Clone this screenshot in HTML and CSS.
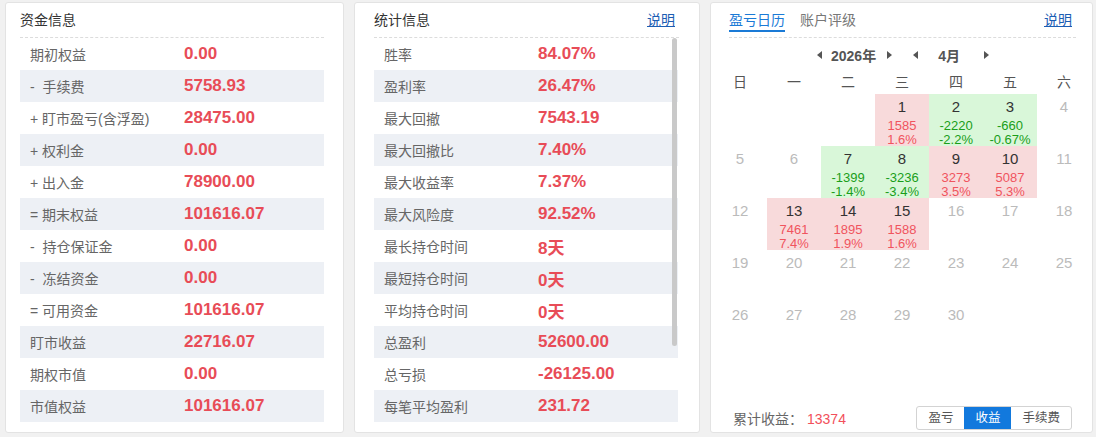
FILE: index.html
```html
<!DOCTYPE html>
<html lang="zh-CN">
<head>
<meta charset="utf-8">
<title>账户信息</title>
<link rel="stylesheet" href="styles.css">
</head>
<body>
<div class="page">
  <section class="card card-fund">
    <div class="card-head"><span class="title">资金信息</span></div>
    <div class="rows">
      <div class="row"><span class="lbl">期初权益</span><span class="val">0.00</span></div>
      <div class="row"><span class="lbl">-&nbsp; 手续费</span><span class="val">5758.93</span></div>
      <div class="row"><span class="lbl">+ 盯市盈亏(含浮盈)</span><span class="val">28475.00</span></div>
      <div class="row"><span class="lbl">+ 权利金</span><span class="val">0.00</span></div>
      <div class="row"><span class="lbl">+ 出入金</span><span class="val">78900.00</span></div>
      <div class="row"><span class="lbl">= 期末权益</span><span class="val">101616.07</span></div>
      <div class="row"><span class="lbl">-&nbsp; 持仓保证金</span><span class="val">0.00</span></div>
      <div class="row"><span class="lbl">-&nbsp; 冻结资金</span><span class="val">0.00</span></div>
      <div class="row"><span class="lbl">= 可用资金</span><span class="val">101616.07</span></div>
      <div class="row"><span class="lbl">盯市收益</span><span class="val">22716.07</span></div>
      <div class="row"><span class="lbl">期权市值</span><span class="val">0.00</span></div>
      <div class="row"><span class="lbl">市值权益</span><span class="val">101616.07</span></div>
    </div>
  </section>

  <section class="card card-stat">
    <div class="card-head"><span class="title">统计信息</span><a class="help" href="#">说明</a></div>
    <div class="rows scroll">
      <div class="row"><span class="lbl">胜率</span><span class="val">84.07%</span></div>
      <div class="row"><span class="lbl">盈利率</span><span class="val">26.47%</span></div>
      <div class="row"><span class="lbl">最大回撤</span><span class="val">7543.19</span></div>
      <div class="row"><span class="lbl">最大回撤比</span><span class="val">7.40%</span></div>
      <div class="row"><span class="lbl">最大收益率</span><span class="val">7.37%</span></div>
      <div class="row"><span class="lbl">最大风险度</span><span class="val">92.52%</span></div>
      <div class="row"><span class="lbl">最长持仓时间</span><span class="val">8天</span></div>
      <div class="row"><span class="lbl">最短持仓时间</span><span class="val">0天</span></div>
      <div class="row"><span class="lbl">平均持仓时间</span><span class="val">0天</span></div>
      <div class="row"><span class="lbl">总盈利</span><span class="val">52600.00</span></div>
      <div class="row"><span class="lbl">总亏损</span><span class="val">-26125.00</span></div>
      <div class="row"><span class="lbl">每笔平均盈利</span><span class="val">231.72</span></div>
      <div class="scroll-thumb"></div>
    </div>
  </section>

  <section class="card card-cal">
    <div class="card-head">
      <div class="tabs"><span class="tab active">盈亏日历</span><span class="tab">账户评级</span></div>
      <a class="help" href="#">说明</a>
    </div>
    <div class="cal-nav">
      <span class="arr left"></span><span class="nav-txt year">2026年</span><span class="arr right"></span>
      <span class="arr left m"></span><span class="nav-txt month">4月</span><span class="arr right"></span>
    </div>
    <div class="cal">
      <div class="wd">日</div><div class="wd">一</div><div class="wd">二</div><div class="wd">三</div><div class="wd">四</div><div class="wd">五</div><div class="wd">六</div>

      <div class="day"></div><div class="day"></div><div class="day"></div>
      <div class="day up"><span class="dn">1</span><span class="sv">1585</span><span class="sv">1.6%</span></div>
      <div class="day down"><span class="dn">2</span><span class="sv">-2220</span><span class="sv">-2.2%</span></div>
      <div class="day down"><span class="dn">3</span><span class="sv">-660</span><span class="sv">-0.67%</span></div>
      <div class="day off"><span class="dn">4</span></div>

      <div class="day off"><span class="dn">5</span></div>
      <div class="day off"><span class="dn">6</span></div>
      <div class="day down"><span class="dn">7</span><span class="sv">-1399</span><span class="sv">-1.4%</span></div>
      <div class="day down"><span class="dn">8</span><span class="sv">-3236</span><span class="sv">-3.4%</span></div>
      <div class="day up"><span class="dn">9</span><span class="sv">3273</span><span class="sv">3.5%</span></div>
      <div class="day up"><span class="dn">10</span><span class="sv">5087</span><span class="sv">5.3%</span></div>
      <div class="day off"><span class="dn">11</span></div>

      <div class="day off"><span class="dn">12</span></div>
      <div class="day up"><span class="dn">13</span><span class="sv">7461</span><span class="sv">7.4%</span></div>
      <div class="day up"><span class="dn">14</span><span class="sv">1895</span><span class="sv">1.9%</span></div>
      <div class="day up"><span class="dn">15</span><span class="sv">1588</span><span class="sv">1.6%</span></div>
      <div class="day off"><span class="dn">16</span></div>
      <div class="day off"><span class="dn">17</span></div>
      <div class="day off"><span class="dn">18</span></div>

      <div class="day off"><span class="dn">19</span></div>
      <div class="day off"><span class="dn">20</span></div>
      <div class="day off"><span class="dn">21</span></div>
      <div class="day off"><span class="dn">22</span></div>
      <div class="day off"><span class="dn">23</span></div>
      <div class="day off"><span class="dn">24</span></div>
      <div class="day off"><span class="dn">25</span></div>

      <div class="day off"><span class="dn">26</span></div>
      <div class="day off"><span class="dn">27</span></div>
      <div class="day off"><span class="dn">28</span></div>
      <div class="day off"><span class="dn">29</span></div>
      <div class="day off"><span class="dn">30</span></div>
      <div class="day"></div><div class="day"></div>
    </div>
    <div class="cal-foot">
      <div class="total"><span class="total-lbl">累计收益：</span><span class="total-val">13374</span></div>
      <div class="btns"><span class="btn">盈亏</span><span class="btn active">收益</span><span class="btn">手续费</span></div>
    </div>
  </section>
</div>
</body>
</html>
```

FILE: styles.css
```css
* { box-sizing: border-box; }
html, body { margin: 0; padding: 0; }
body {
  background: #f1f1f1;
  font-family: "Liberation Sans", "Noto Sans CJK SC", sans-serif;
  font-size: 14px;
  color: #333;
  width: 1096px;
  height: 437px;
  overflow: hidden;
}
.page {
  display: grid;
  grid-template-columns: 339px 346px 383px;
  column-gap: 10px;
  padding: 2px 0 0 5px;
}
.card {
  background: #fff;
  border: 1px solid #e3e3e3;
  border-radius: 3px;
  height: 431px;
  display: flex;
  flex-direction: column;
}
.card-head {
  display: flex;
  justify-content: space-between;
  align-items: flex-start;
  padding-top: 7px;
  height: 35px;
  border-bottom: 1px dashed #dcdcdc;
}
.title {
  line-height: 20px;
  color: #333;
  font-size: 14px;
}
.help {
  line-height: 20px;
  color: #1b5db3;
  text-decoration: underline;
  margin-right: 4px;
}
.card-fund .card-head, .card-fund .rows { margin: 0 19px 0 14px; }
.card-stat .card-head { margin: 0 20px 0 19px; }
.card-stat .rows { margin: 0 21px 0 19px; }
.card-cal .card-head { margin: 0 16px 0 18px; }

.rows { height: 384px; }
.scroll { position: relative; overflow: hidden; }
.scroll-thumb {
  position: absolute;
  top: 0;
  right: 1px;
  width: 5px;
  height: 308px;
  background: #c9c9c9;
  border-radius: 3px;
}

.row {
  display: flex;
  align-items: center;
  height: 32px;
}
.row:nth-child(even) { background: #edf0f5; }
.lbl {
  width: 164px;
  padding-left: 10px;
  color: #666;
  font-size: 14px;
  white-space: nowrap;
}
.val {
  color: #e84c57;
  font-weight: bold;
  font-size: 17px;
}

/* calendar card */
.tabs { display: flex; gap: 15px; }
.tab {
  line-height: 20px;
  color: #777;
  border-bottom: 2px solid transparent;
}
.tab.active { color: #1a7ad6; border-bottom-color: #1a7ad6; }

.cal-nav {
  display: flex;
  align-items: center;
  height: 20px;
  margin-top: 7px;
  padding-left: 106px;
}
.nav-txt {
  font-weight: bold;
  font-size: 14px;
  color: #555;
}
.year { margin: 0 11px 0 9px; }
.month { margin: 0 24px 0 20px; }
.arr {
  width: 0; height: 0;
  border-top: 4px solid transparent;
  border-bottom: 4px solid transparent;
}
.arr.left { border-right: 5px solid #555; }
.arr.right { border-left: 5px solid #555; }
.arr.m { margin-left: 21px; }

.cal {
  display: grid;
  grid-template-columns: repeat(7, 54px);
  grid-template-rows: 24px repeat(5, 52px);
  margin: 5px 0 0 2px;
}
.wd {
  text-align: center;
  line-height: 24px;
  color: #555;
  font-size: 14px;
}
.day {
  display: flex;
  flex-direction: column;
  align-items: center;
  padding-top: 4px;
}
.dn {
  line-height: 18px;
  font-size: 15px;
  color: #333;
  margin-bottom: 3px;
}
.off .dn { color: #bbb; }
.sv { font-size: 13px; line-height: 13.5px; }
.up { background: #f8dadb; }
.up .sv { color: #f0545e; }
.down { background: #d9f7d9; }
.down .sv { color: #1a9e1a; }

.cal-foot {
  margin-top: auto;
  display: flex;
  justify-content: space-between;
  align-items: center;
  padding: 0 20px 2px 22px;
}
.total { font-size: 14px; }
.total-lbl { color: #666; }
.total-val { color: #f24f5b; margin-left: 4px; }
.btns {
  display: flex;
  border: 1px solid #d3d3d3;
  border-radius: 3px;
  height: 24px;
  overflow: hidden;
}
.btn {
  padding: 0 11px;
  line-height: 22px;
  font-size: 12.5px;
  color: #555;
}
.btn.active { background: #1279dd; color: #fff; }
```
